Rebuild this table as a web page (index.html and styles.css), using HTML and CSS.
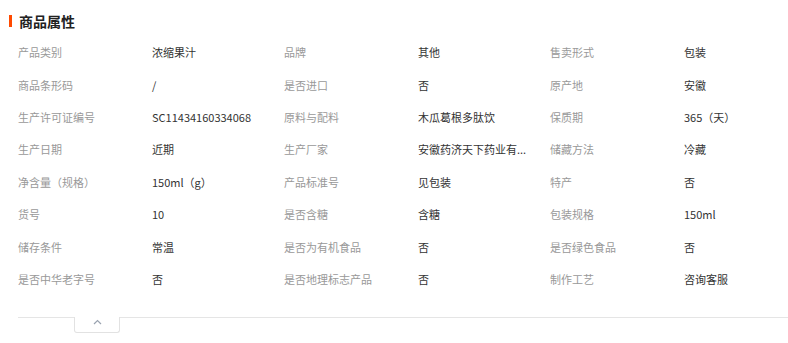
FILE: index.html
```html
<!DOCTYPE html>
<html lang="zh">
<head>
<meta charset="utf-8">
<link rel="stylesheet" href="styles.css">
</head>
<body>
<div class="panel">
  <h2 class="title"><span class="mark"></span>商品属性</h2>
  <div class="grid">
    <span class="k">产品类别</span><span class="v">浓缩果汁</span>
    <span class="k">品牌</span><span class="v">其他</span>
    <span class="k">售卖形式</span><span class="v">包装</span>

    <span class="k">商品条形码</span><span class="v">/</span>
    <span class="k">是否进口</span><span class="v">否</span>
    <span class="k">原产地</span><span class="v">安徽</span>

    <span class="k">生产许可证编号</span><span class="v">SC11434160334068</span>
    <span class="k">原料与配料</span><span class="v">木瓜葛根多肽饮</span>
    <span class="k">保质期</span><span class="v">365（天）</span>

    <span class="k">生产日期</span><span class="v">近期</span>
    <span class="k">生产厂家</span><span class="v">安徽药济天下药业有...</span>
    <span class="k">储藏方法</span><span class="v">冷藏</span>

    <span class="k">净含量（规格）</span><span class="v">150ml（g）</span>
    <span class="k">产品标准号</span><span class="v">见包装</span>
    <span class="k">特产</span><span class="v">否</span>

    <span class="k">货号</span><span class="v">10</span>
    <span class="k">是否含糖</span><span class="v">含糖</span>
    <span class="k">包装规格</span><span class="v">150ml</span>

    <span class="k">储存条件</span><span class="v">常温</span>
    <span class="k">是否为有机食品</span><span class="v">否</span>
    <span class="k">是否绿色食品</span><span class="v">否</span>

    <span class="k">是否中华老字号</span><span class="v">否</span>
    <span class="k">是否地理标志产品</span><span class="v">否</span>
    <span class="k">制作工艺</span><span class="v">咨询客服</span>
  </div>
  <div class="footer">
    <div class="toggle">
      <svg width="9" height="6" viewBox="0 0 9 6"><path d="M1 5 L4.5 1.5 L8 5" fill="none" stroke="#9aa3b0" stroke-width="1.2"/></svg>
    </div>
  </div>
</div>
</body>
</html>
```
FILE: styles.css
```css
html, body {
  margin: 0;
  padding: 0;
  background: #fff;
}
body {
  font-family: "Noto Sans CJK SC", "Noto Sans", sans-serif;
  font-size: 11px;
  color: #333;
}
.panel {
  padding: 10px 0 0 18px;
}
.title {
  display: flex;
  align-items: center;
  margin: 0 0 0 -9px;
  height: 22px;
  font-size: 14px;
  font-weight: bold;
  color: #222;
  line-height: 22px;
}
.mark {
  width: 3px;
  height: 12px;
  background: #ff4a00;
  margin-right: 7px;
}
.grid {
  margin-top: 4px;
  display: grid;
  grid-template-columns: 134px 132px 134px 132px 134px 1fr;
  grid-auto-rows: 32.43px;
  align-items: center;
}
.k {
  color: #999;
}
.v {
  color: #333;
  white-space: nowrap;
}
.footer {
  margin-top: 22px;
  border-top: 1px solid #e5e5e5;
  height: 26px;
}
.toggle {
  margin: -1px 0 0 56px;
  width: 46px;
  height: 16px;
  background: #fff;
  border: 1px solid #e2e2e2;
  border-top: none;
  border-radius: 0 0 3px 3px;
  display: flex;
  justify-content: center;
  padding-top: 2px;
  box-sizing: border-box;
}
.toggle svg {
  display: block;
}
```
